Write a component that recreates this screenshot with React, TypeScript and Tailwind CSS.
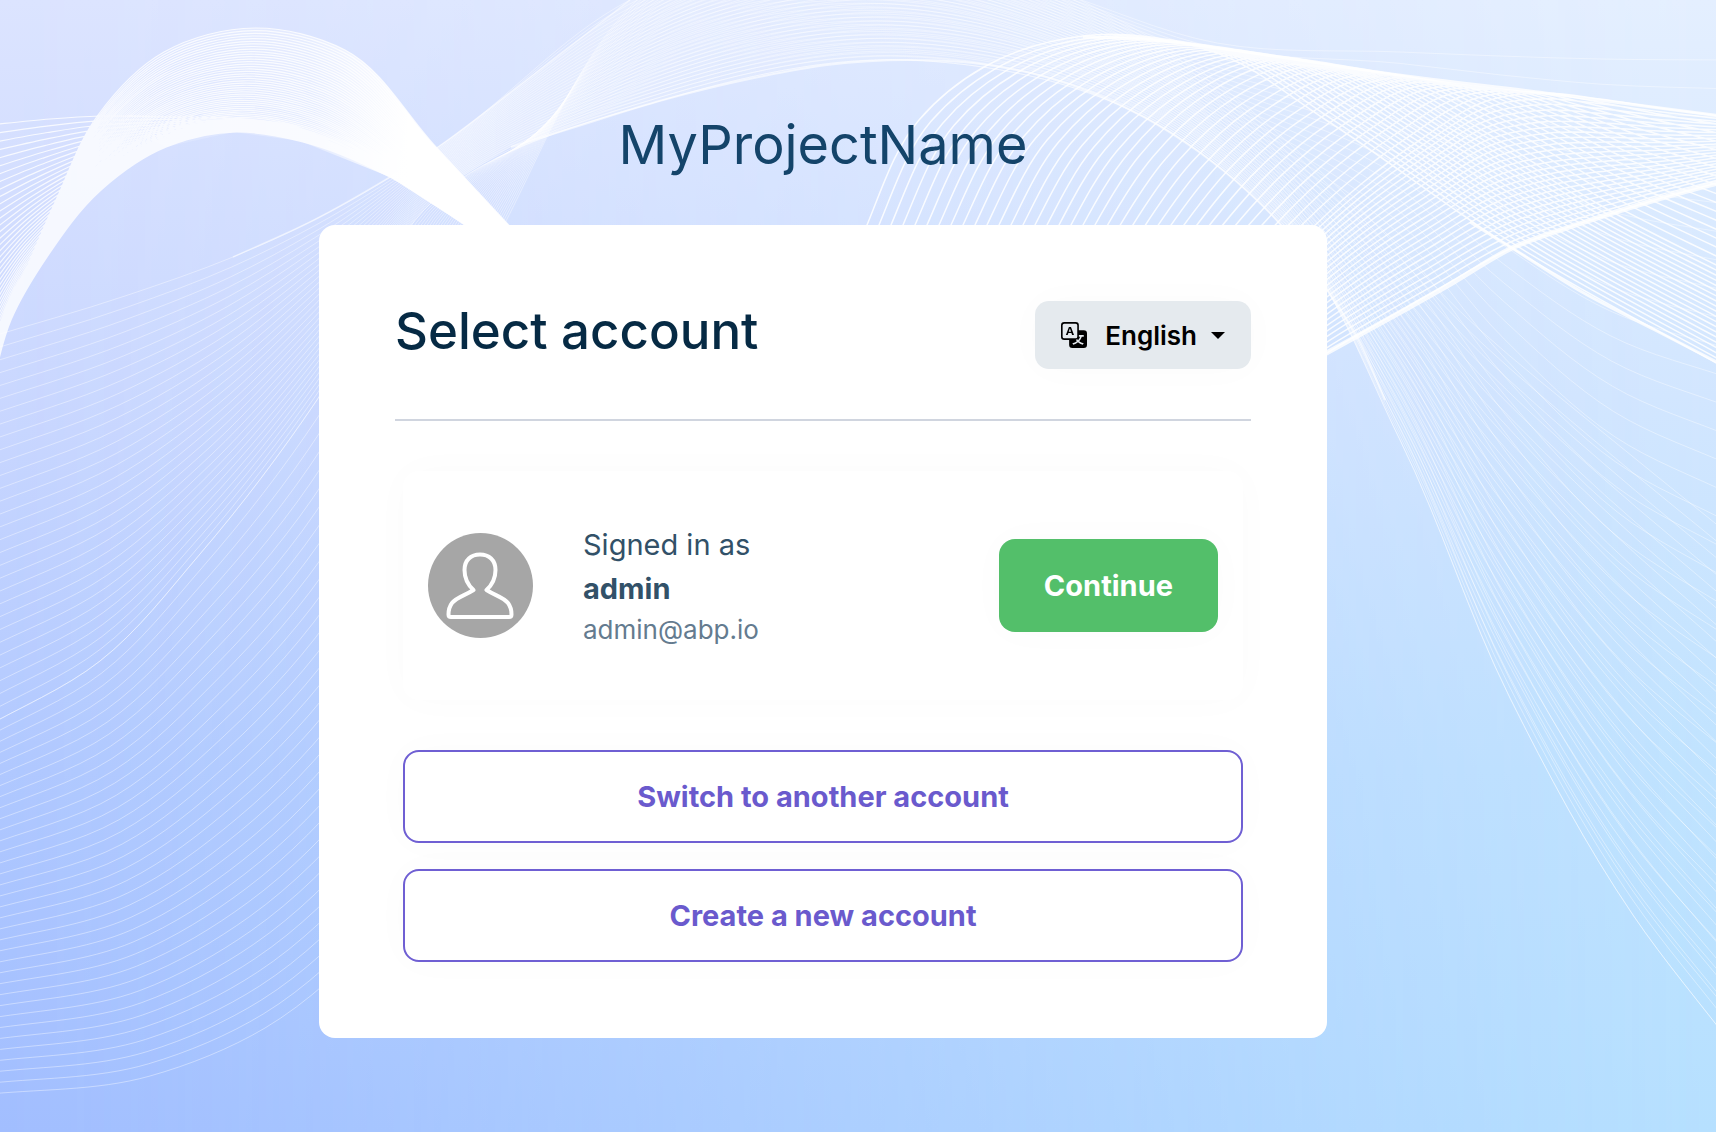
import React from "react";
import { BsTranslate } from "react-icons/bs";

type Point = [number, number];

/** Smooth path through the points; tangents are weighted by segment length. */
function spline(points: Point[]): string {
  const last = points.length - 1;
  const dist = (p: Point, q: Point) => Math.hypot(q[0] - p[0], q[1] - p[1]);
  const tangent = (i: number): Point => {
    if (i === 0 || i === last) {
      const p = points[i === 0 ? 0 : last - 1];
      const q = points[i === 0 ? 1 : last];
      const d = dist(p, q);
      return [(q[0] - p[0]) / d, (q[1] - p[1]) / d];
    }
    const [a, b, c] = [points[i - 1], points[i], points[i + 1]];
    const d1 = dist(a, b);
    const d2 = dist(b, c);
    const mix = (k: 0 | 1) => (((b[k] - a[k]) / d1) * d2 + ((c[k] - b[k]) / d2) * d1) / (d1 + d2);
    return [mix(0), mix(1)];
  };
  let d = `M${points[0][0].toFixed(1)} ${points[0][1].toFixed(1)}`;
  for (let i = 0; i < last; i++) {
    const b = points[i];
    const c = points[i + 1];
    const len = dist(b, c) / 3;
    const u = tangent(i);
    const v = tangent(i + 1);
    const n = [b[0] + u[0] * len, b[1] + u[1] * len, c[0] - v[0] * len, c[1] - v[1] * len, c[0], c[1]];
    d += `C${n.map((x) => x.toFixed(1)).join(" ")}`;
  }
  return d;
}

type Ease = (t: number) => number;
const linear: Ease = (t) => t;
const easeOut: Ease = (t) => 1 - (1 - t) ** 1.7;
const easeIn: Ease = (t) => t ** 1.3;

/** Lines that morph from one key curve to the next. */
function ribbon(keys: Point[][], counts: number[], eases: Ease[] = []): string {
  let d = "";
  for (let k = 0; k < keys.length - 1; k++) {
    const ease = eases[k] ?? linear;
    for (let i = 0; i <= counts[k]; i++) {
      const t = ease(i / counts[k]);
      d += spline(
        keys[k].map((p, j): Point => [
          p[0] + (keys[k + 1][j][0] - p[0]) * t,
          p[1] + (keys[k + 1][j][1] - p[1]) * t,
        ]),
      );
    }
  }
  return d;
}

const arch: Point[][] = [
  [[-20, 126], [50, 119], [100, 116], [170, 117], [233, 118], [300, 128], [360, 158], [434, 197], [480, 235]],
  [[-12, 405], [11, 320], [47, 257], [100, 191], [166, 147], [233, 132], [300, 141], [390, 177], [480, 235]],
  [[-14, 375], [20, 285], [56, 200], [98, 115], [164, 52], [255, 28], [345, 50], [436, 147], [518, 235]],
];

const veil: Point[][] = [
  [[-20, 340], [128, 295], [233, 257], [314, 220], [438, 147], [630, 0], [850, -70], [1080, 0], [1170, 50], [1330, 180], [1480, 330], [1600, 430], [1736, 540]],
  [[-20, 730], [100, 661], [200, 554], [317, 400], [434, 200], [663, 100], [908, 60], [1144, 117], [1281, 225], [1400, 440], [1510, 698], [1633, 915], [1736, 1050]],
  [[-20, 1095], [150, 1076], [265, 1028], [380, 930], [505, 223], [680, -30], [850, -60], [1050, -10], [1217, 43], [1400, 52], [1500, 56], [1600, 59], [1736, 60]],
];

const net: Point[][] = [
  [[840, 300], [867, 225], [919, 120], [984, 67], [1083, 36], [1217, 53], [1326, 120], [1512, 248], [1736, 374]],
  [[1060, 300], [1095, 225], [1140, 155], [1195, 102], [1280, 62], [1390, 80], [1490, 135], [1600, 205], [1736, 275]],
  [[1230, 320], [1300, 240], [1360, 185], [1420, 140], [1490, 100], [1545, 93], [1600, 99], [1660, 108], [1736, 118]],
  [[1290, 378], [1327, 353], [1370, 328], [1430, 294], [1512, 248], [1560, 230], [1610, 214], [1655, 200], [1736, 178]],
];

const topEdge: Point[] = [[233, 257], [314, 220], [390, 177], [438, 147], [511, 92], [572, 45], [630, 0]];
const crest: Point[] = [[511, 147], [572, 128], [663, 100], [754, 78], [827, 65], [908, 60], [973, 63], [1046, 77], [1144, 117], [1199, 152], [1246, 190], [1281, 225], [1327, 290], [1356, 335], [1385, 400]];
const netTop: Point[] = [[1083, 37], [1144, 39], [1217, 48], [1399, 75], [1545, 93], [1736, 118]];
const netBottom: Point[] = [[1310, 362], [1399, 313], [1454, 282], [1512, 248], [1582, 223], [1655, 200], [1736, 178]];
const netTail: Point[] = [[1470, 222], [1512, 248], [1582, 292], [1655, 330], [1736, 372]];

const archPath = ribbon(arch, [50, 50], [easeOut, easeIn]);
const veilPath = ribbon(veil, [30, 34]);
const netPath = ribbon(net, [19, 17, 24]);

function Backdrop() {
  return (
    <div className="absolute inset-0 overflow-hidden bg-[linear-gradient(to_bottom,#dce4ff_0%,#c8d6ff_38%,#b0c8ff_68%,#a2beff_100%)]">
      <div className="absolute inset-0 bg-[linear-gradient(to_bottom,#e4efff_0%,#d2e6ff_35%,#c0e3ff_68%,#b6e0ff_100%)] mask-[linear-gradient(to_right,transparent,black)]" />
      <svg
        className="absolute inset-0 size-full"
        viewBox="0 0 1716 1132"
        preserveAspectRatio="none"
        fill="none"
        stroke="#fff"
        aria-hidden="true"
      >
        <defs>
          <linearGradient id="sheen" x1="0" x2="1" y1="0" y2="0">
            <stop offset="0" stopColor="#fff" stopOpacity="0.05" />
            <stop offset="0.5" stopColor="#fff" stopOpacity="0.3" />
            <stop offset="0.74" stopColor="#fff" />
          </linearGradient>
          <linearGradient id="mist" x1="0" x2="1" y1="0" y2="0">
            <stop offset="0" stopColor="#fff" stopOpacity="0.4" />
            <stop offset="0.4" stopColor="#fff" stopOpacity="0.15" />
            <stop offset="1" stopColor="#fff" stopOpacity="0.05" />
          </linearGradient>
        </defs>
        <path
          d="M390 177L438 147L511 92L572 45L630 0H1080L1168 38L1246 190L1199 152L1144 117L1046 77L973 63L908 60L827 65L754 78L663 100L572 128L511 147L440 190Z"
          fill="url(#mist)"
          stroke="none"
        />
        <path d={veilPath} strokeWidth="1" strokeOpacity="0.4" />
        <path d={spline(topEdge)} strokeWidth="1.5" strokeOpacity="0.5" />
        <path d={spline(crest)} strokeWidth="2" strokeOpacity="0.6" />
        <path d={netPath} strokeWidth="1.5" strokeOpacity="0.85" />
        <path d={spline(netTop)} strokeWidth="3" strokeOpacity="0.8" />
        <path d={spline(netBottom)} strokeWidth="5" strokeOpacity="0.8" />
        <path d={spline(netTail)} strokeWidth="3" strokeOpacity="0.8" />
        <path d={archPath} strokeWidth="1.2" strokeOpacity="0.8" />
        <path
          d={`${spline(arch[2].slice(3))}L480 235L390 177L300 141L233 132L166 147Z`}
          fill="url(#sheen)"
          stroke="none"
        />
      </svg>
    </div>
  );
}

function Avatar() {
  return (
    <svg className="size-[105px] shrink-0" viewBox="0 0 105 105" role="img" aria-label="Profile picture">
      <circle cx="52.5" cy="52.5" r="52.5" fill="#a6a6a6" />
      <path
        d="M45.500 57C40 52 36.500 45 36.500 37C36.500 27 43 21.500 52 21.500S67.500 27 67.500 37C67.500 45 64 52 58.500 57C67 62.500 75 64 80 70C83 74 83.500 78 83.500 81.500Q83.500 84 81 84H23Q20.500 84 20.500 81.500C20.500 78 21 74 24 70C29 64 37 62.500 45.500 57Z"
        fill="none"
        stroke="#fff"
        strokeWidth="4"
        strokeLinejoin="round"
      />
    </svg>
  );
}

function OutlineButton({ children }: { children: React.ReactNode }) {
  return (
    <button
      type="button"
      className="h-[93px] w-full rounded-2xl border-2 border-[#6f5fd3] text-[29px] font-bold text-[#6a5acd] shadow-[0_0_40px_rgba(0,0,0,0.02)]"
    >
      {children}
    </button>
  );
}

export default function App() {
  return (
    <div className="relative min-h-screen font-['Inter',sans-serif]">
      <Backdrop />
      <main className="relative flex flex-col items-center pr-[70px] pt-[108px] pb-[93px]">
        <h1 className="text-[54px] leading-[74px] text-[#14446a]">MyProjectName</h1>
        <section className="mt-[43px] w-full max-w-[1008px] rounded-2xl bg-white p-[76px]">
          <header className="flex items-start justify-between border-b-2 border-[#d0d5df] pb-[50px]">
            <h2 className="text-[51px] leading-[60px] font-medium text-[#062a44]">Select account</h2>
            <button
              type="button"
              className="flex h-[68px] items-center rounded-[14px] bg-[#e5eaee] px-[26px] text-[26px] font-semibold text-black shadow-[0_0_40px_rgba(0,0,0,0.02)]"
            >
              <BsTranslate className="size-[26px]" />
              <span className="ml-[18px]">English</span>
              <span className="ml-[14px] border-x-[7px] border-t-[7px] border-x-transparent border-t-black" />
            </button>
          </header>
          <div className="px-2">
            <div className="mt-[50px] flex h-[229px] items-center rounded-2xl px-[25px] shadow-[0_0_40px_rgba(0,0,0,0.02)]">
              <Avatar />
              <div className="ml-[50px] grow text-[#325168]">
                <p className="text-[29px] leading-[44px]">Signed in as</p>
                <p className="text-[29px] leading-[44px] font-bold">admin</p>
                <p className="text-[26px] leading-[38px] text-[#647b8f]">admin@abp.io</p>
              </div>
              <button
                type="button"
                className="h-[93px] rounded-2xl bg-[#53bf6a] px-[45px] text-[29px] font-bold text-white shadow-[0_0_40px_rgba(0,0,0,0.02)]"
              >
                Continue
              </button>
            </div>
            <div className="mt-[50px] flex flex-col gap-[26px]">
              <OutlineButton>Switch to another account</OutlineButton>
              <OutlineButton>Create a new account</OutlineButton>
            </div>
          </div>
        </section>
      </main>
    </div>
  );
}
